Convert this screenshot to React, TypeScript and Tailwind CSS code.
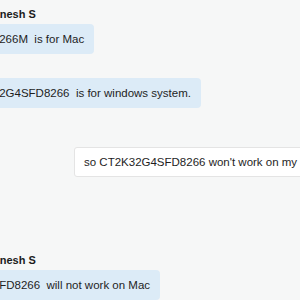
const font = { fontFamily: '"Liberation Sans", Arial, sans-serif' };

function SenderName({ name }: { name: string }) {
  return (
    <div className="pl-[61px] text-[11px] font-bold leading-[15px] text-[#1c1c1c] whitespace-nowrap">
      {name}
    </div>
  );
}

function TheirBubble({ text, className = '' }: { text: string; className?: string }) {
  return (
    <div className={`self-start rounded-[4px] bg-[#dcebf7] px-[10px] py-[7px] text-[11.5px] leading-[16px] text-[#1e1e1e] whitespace-pre ${className}`}>
      {text}
    </div>
  );
}

export default function App() {
  return (
    <div className="w-[300px] h-[300px] overflow-hidden bg-[#f6f7f7]" style={font}>
      <div className="flex flex-col pt-[7px]">
        <div className="-ml-[76px] flex flex-col">
          <SenderName name="Ganesh S" />
          <TheirBubble className="mt-[2px]" text="CT2K32G4S266M  is for Mac" />
          <TheirBubble className="mt-[24px]" text="while CT2K32G4SFD8266  is for windows system." />
        </div>

        <div className="mt-[39px] flex pl-[74px]">
          <div className="shrink-0 rounded-[3px] border border-[#e4e4e4] bg-white px-[9px] py-[6px] text-[11.5px] leading-[16px] text-[#1e1e1e] whitespace-pre">
            so CT2K32G4SFD8266 won't work on my Mac?
          </div>
        </div>

        <div className="-ml-[76px] mt-[76px] flex flex-col">
          <SenderName name="Ganesh S" />
          <TheirBubble className="mt-[2px]" text="CT2K32G4SFD8266  will not work on Mac" />
        </div>
      </div>
    </div>
  );
}
